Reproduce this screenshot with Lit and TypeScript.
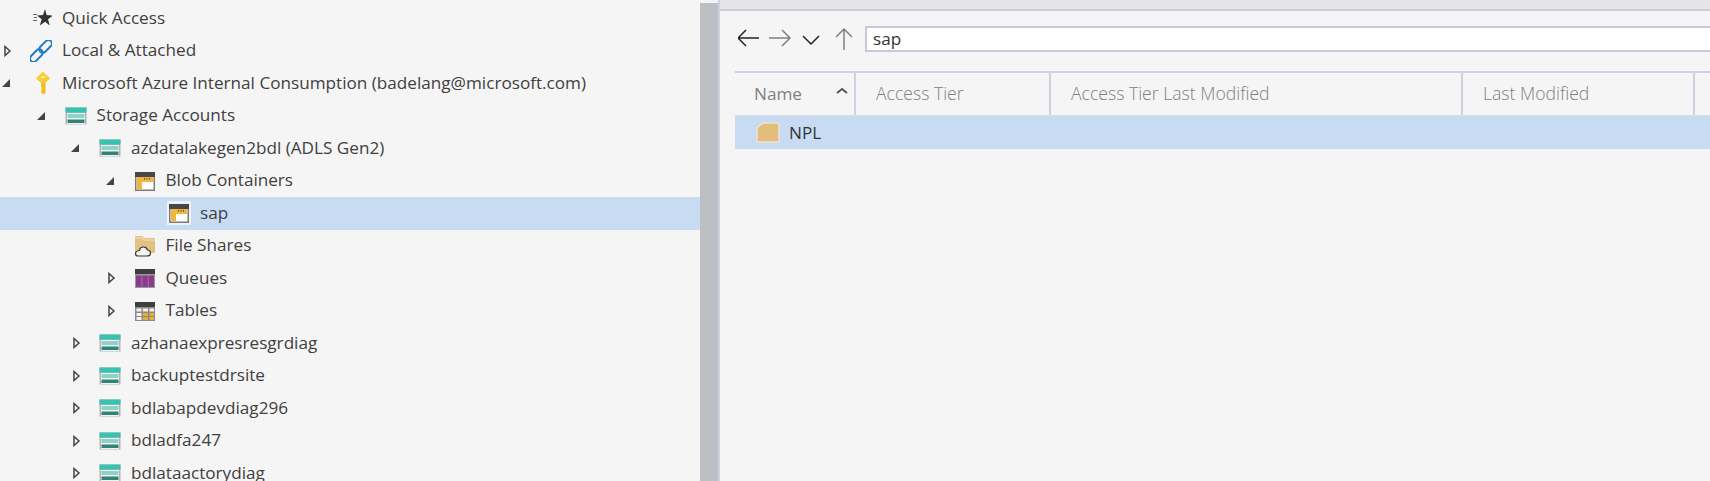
import { LitElement, html, css, svg } from 'lit';
import { customElement } from 'lit/decorators.js';

type Arrow = 'open' | 'closed' | 'none';
type IconName = 'quick' | 'link' | 'key' | 'storage' | 'blob' | 'share' | 'queue' | 'table';

type TreeRow = {
  level: number;
  arrow: Arrow;
  icon: IconName;
  label: string;
  selected?: boolean;
};

const ROWS: TreeRow[] = [
  { level: 0, arrow: 'none', icon: 'quick', label: 'Quick Access' },
  { level: 0, arrow: 'closed', icon: 'link', label: 'Local & Attached' },
  { level: 0, arrow: 'open', icon: 'key', label: 'Microsoft Azure Internal Consumption (badelang@microsoft.com)' },
  { level: 1, arrow: 'open', icon: 'storage', label: 'Storage Accounts' },
  { level: 2, arrow: 'open', icon: 'storage', label: 'azdatalakegen2bdl (ADLS Gen2)' },
  { level: 3, arrow: 'open', icon: 'blob', label: 'Blob Containers' },
  { level: 4, arrow: 'none', icon: 'blob', label: 'sap', selected: true },
  { level: 3, arrow: 'none', icon: 'share', label: 'File Shares' },
  { level: 3, arrow: 'closed', icon: 'queue', label: 'Queues' },
  { level: 3, arrow: 'closed', icon: 'table', label: 'Tables' },
  { level: 2, arrow: 'closed', icon: 'storage', label: 'azhanaexpresresgrdiag' },
  { level: 2, arrow: 'closed', icon: 'storage', label: 'backuptestdrsite' },
  { level: 2, arrow: 'closed', icon: 'storage', label: 'bdlabapdevdiag296' },
  { level: 2, arrow: 'closed', icon: 'storage', label: 'bdladfa247' },
  { level: 2, arrow: 'closed', icon: 'storage', label: 'bdlataactorydiag' },
];

const ICONS: Record<IconName, unknown> = {
  quick: svg`
    <path d="M3 7.500h4M4 10.500h3M3 13.500h4" stroke="#666" stroke-width="1" fill="none"/>
    <path d="M15 2l1.600 6 6.400 .5-5 3.700 1.800 6.300-4.800-3.700-5.200 3.700 1.900-6.300-4.700-3.700 6-.5z" fill="#333"/>`,
  link: svg`
    <g fill="none" stroke="#1f7cc4" stroke-width="2" transform="rotate(-45 11 11)">
      <rect x="-3" y="7.500" width="15" height="7" rx="3.500"/>
      <rect x="10" y="7.500" width="15" height="7" rx="3.500"/>
    </g>`,
  key: svg`
    <g transform="translate(1.500 0)">
      <path d="M11.500 0l7 6.500-4.500 4V21l-2 1.500-2.500-2v-1.500l1-1-1-1 1-1-1-1v-4.500L4.500 6.500z" fill="#f5bc1c"/>
      <path d="M11.500 0l7 6.500-4.500 4H9.500L4.500 6.500z" fill="#f8cb3b"/>
      <rect x="9.500" y="4.500" width="4" height="1.500" fill="#fff0ae"/>
    </g>`,
  storage: svg`
    <rect x="0.500" y="2.500" width="21" height="17" fill="#b4b6b6"/>
    <rect x="2" y="8" width="18" height="11" fill="#f1f1f1"/>
    <rect x="0.500" y="2.500" width="21" height="5" fill="#38c2b0"/>
    <rect x="2.500" y="9" width="17" height="4" fill="#8ed3c7"/>
    <rect x="2.500" y="14.500" width="17" height="3.500" fill="#2f8478"/>`,
  blob: svg`
    <rect x="1" y="2" width="20" height="19" fill="#7b7b78"/>
    <rect x="1" y="2" width="20" height="5" fill="#474747"/>
    <rect x="2.500" y="7" width="17" height="12.500" fill="#fff"/>
    <path d="M3 7h16v5H8v7.500H3z" fill="#efb73e"/>
    <path d="M10 8h1v1.500h-1zM12.500 8h1v1.500h-1zM15 8h1v1.500h-1z" fill="#4a4a4a"/>`,
  share: svg`
    <path d="M1 1h7l2 2h11v15H1z" fill="#e5c085"/>
    <path d="M1 3h7l2 2h11" stroke="#f5e3c2" stroke-width="1" fill="none"/>
    <path d="M4 21h9c2.500 0 3.500-1.500 3.500-3s-1.200-3-3-3c-.6-2-2.200-3-4-3-2.200 0-3.800 1.500-4 3.500C3.500 15.700 1.500 16.500 1.500 18.500 1.500 20 2.500 21 4 21z" fill="#f5f5f5" stroke="#333" stroke-width="1.200"/>`,
  queue: svg`
    <rect x="1" y="2" width="20" height="19" fill="#9a9a9a"/>
    <rect x="1" y="2" width="20" height="5" fill="#3f3f3f"/>
    <rect x="2" y="8.500" width="5.500" height="11.500" fill="#8e3a8e"/>
    <rect x="8.300" y="8.500" width="5.500" height="11.500" fill="#8e3a8e"/>
    <rect x="14.500" y="8.500" width="5.500" height="11.500" fill="#8e3a8e"/>`,
  table: svg`
    <rect x="1" y="2" width="20" height="19" fill="#8a8a86"/>
    <rect x="1" y="2" width="20" height="5" fill="#3f3f3f"/>
    <path d="M2.500 8.500h5v3h-5zM9 8.500h5v3H9zM15.500 8.500h4.500v3h-4.500zM2.500 13h5v3h-5zM2.500 17h5v3h-5z" fill="#f3f3f3"/>
    <path d="M9 13h5v3H9zM15.500 13h4.500v3h-4.500zM9 17h5v3H9zM15.500 17h4.500v3h-4.500z" fill="#e6ad37"/>`,
};

@customElement('app-root')
export class AppRoot extends LitElement {
  static styles = css`
    :host {
      display: block;
      height: 481px;
      overflow: hidden;
      background: #f5f5f5;
      font-family: 'Open Sans', 'Liberation Sans', sans-serif;
      font-size: 17.15px;
      color: #404040;
    }

    .page {
      display: flex;
      height: 481px;
    }

    .tree {
      width: 700px;
      flex: none;
      padding-top: 2px;
      overflow: hidden;
    }

    .row {
      display: flex;
      align-items: center;
      height: 32.5px;
    }

    .row.selected {
      background: #c7dbf3;
    }

    .arrow {
      width: 15px;
      height: 12px;
      flex: none;
      margin-right: 15px;
    }

    .icon {
      width: 22px;
      height: 22px;
      flex: none;
      margin-right: 10px;
    }

    .selected .icon {
      background: #eef3fa;
      outline: 1px solid #eef3fa;
    }

    .label {
      position: relative;
      top: -1px;
      white-space: nowrap;
    }

    .splitter {
      width: 18px;
      flex: none;
      margin-top: 3px;
      background: #bebfc4;
    }

    .main {
      flex: 1;
      min-width: 0;
      border-left: 2px solid #d0d0e0;
    }

    .tabs {
      height: 9px;
      background: #e4e4e8;
      border-bottom: 2px solid #cbcbdb;
    }

    .toolbar {
      display: flex;
      align-items: center;
      height: 26px;
      margin-top: 15px;
      padding-left: 18px;
    }

    .nav {
      display: block;
      flex: none;
    }

    .path {
      flex: 1;
      height: 22px;
      margin-left: 11px;
      margin-right: -4px;
      padding-left: 6px;
      line-height: 22px;
      background: #fff;
      border: 2px solid #c9c9d9;
      color: #333;
    }

    .table {
      margin: 19px 0 0 15px;
    }

    .head {
      display: grid;
      grid-template-columns: 121px 195px 412px 232px 1fr;
      height: 42px;
      border-top: 2px solid #d0d0e0;
      border-bottom: 1px solid #dcdce6;
      color: #808080;
    }

    .col {
      position: relative;
      display: flex;
      align-items: center;
      padding: 0 0 2px 20px;
      border-right: 2px solid #d0d0e0;
      white-space: nowrap;
      font-size: 17.6px;
      font-weight: 300;
    }

    .col:first-child {
      padding-left: 19px;
      font-size: 17.15px;
      font-weight: 400;
    }

    .col:last-child {
      border-right: none;
    }

    .caret {
      position: absolute;
      right: 6px;
      top: 14px;
    }

    .item {
      display: flex;
      align-items: center;
      height: 33px;
      padding-left: 21px;
      background: #c7dbf3;
      color: #333;
    }

    .folder {
      margin-right: 9px;
    }
  `;

  private renderArrow(arrow: Arrow) {
    return html`<svg class="arrow" viewBox="0 0 15 12">
      ${arrow === 'open' ? svg`<path d="M10 2v8H2z" fill="#444"/>` : ''}
      ${arrow === 'closed' ? svg`<path d="M5 1.500v9l5-4.500z" fill="#f5f5f5" stroke="#444" stroke-width="1.500"/>` : ''}
    </svg>`;
  }

  private renderRow(row: TreeRow) {
    return html`
      <div class="row ${row.selected ? 'selected' : ''}" style="padding-left: ${row.level * 34.5}px">
        ${this.renderArrow(row.arrow)}
        <svg class="icon" viewBox="0 0 22 22">${ICONS[row.icon]}</svg>
        <span class="label">${row.label}</span>
      </div>
    `;
  }

  private renderNav() {
    return html`
      <svg class="nav" width="116" height="26" viewBox="0 0 116 26" fill="none" stroke-width="1.500">
        <path d="M0 12h21M8 4l-8 8 8 8" stroke="#222"/>
        <path d="M31 12h21M44 4l8 8-8 8" stroke="#808080"/>
        <path d="M65 10l8 8 8-8" stroke="#222"/>
        <path d="M106 24V3M98 11l8-8 8 8" stroke="#808080"/>
      </svg>
    `;
  }

  render() {
    return html`
      <div class="page">
        <div class="tree">${ROWS.map(row => this.renderRow(row))}</div>
        <div class="splitter"></div>
        <div class="main">
          <div class="tabs"></div>
          <div class="toolbar">
            ${this.renderNav()}
            <div class="path">sap</div>
          </div>
          <div class="table">
            <div class="head">
              <div class="col">
                Name
                <svg class="caret" width="12" height="8" viewBox="0 0 12 8">
                  <path d="M1 6l5-4 5 4" fill="none" stroke="#555" stroke-width="2"/>
                </svg>
              </div>
              <div class="col">Access Tier</div>
              <div class="col">Access Tier Last Modified</div>
              <div class="col">Last Modified</div>
              <div class="col"></div>
            </div>
            <div class="item">
              <svg class="folder" width="24" height="21" viewBox="0 0 24 21">
                <path d="M1 6l6-5h15a1 1 0 0 1 1 1v17a1 1 0 0 1-1 1H2a1 1 0 0 1-1-1z" fill="#e1bd7e" stroke="#f0e4cf" stroke-width="1.500"/>
              </svg>
              <span>NPL</span>
            </div>
          </div>
        </div>
      </div>
    `;
  }
}
